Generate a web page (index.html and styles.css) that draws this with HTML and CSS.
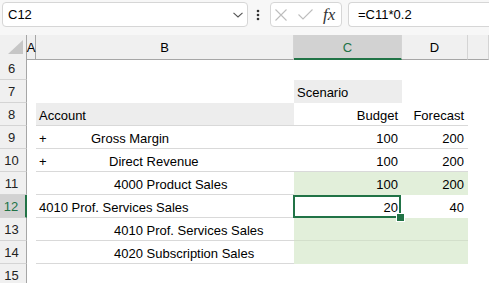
FILE: index.html
```html
<!DOCTYPE html>
<html lang="en">
<head>
  <meta charset="UTF-8" />
  <title>Sheet</title>
  <link rel="stylesheet" href="styles.css">
</head>
<body>
  <div class="toolbar">
    <div class="namebox">
      <span>C12</span>
      <svg width="10" height="6" viewBox="0 0 10 6"><path d="M0.5 0.8 L5 5 L9.5 0.8" fill="none" stroke="#555" stroke-width="1.1"/></svg>
    </div>
    <svg class="more" width="6" height="25" viewBox="0 0 6 25">
      <circle cx="3" cy="9" r="1.3" fill="#333"/>
      <circle cx="3" cy="13" r="1.3" fill="#333"/>
      <circle cx="3" cy="17" r="1.3" fill="#333"/>
    </svg>
    <div class="fxbox">
      <svg class="cancel" width="12" height="12" viewBox="0 0 12 12"><path d="M0.5 0.5 L11.5 11.5 M11.5 0.5 L0.5 11.5" stroke="#bdbdbd" stroke-width="1.1"/></svg>
      <svg class="enter" width="15" height="11" viewBox="0 0 15 11"><path d="M0.5 5.5 L5 10 L14.5 0.5" fill="none" stroke="#bdbdbd" stroke-width="1.1"/></svg>
      <span class="fx">fx</span>
    </div>
    <div class="formula">=C11*0.2</div>
  </div>

  <div class="sheet">
    <div class="row head">
      <div class="corner"><svg width="26" height="21" viewBox="0 0 26 21"><polygon points="8,19 23,19 23,5" fill="#c6c6c6"/></svg></div>
      <div class="ch">A</div>
      <div class="ch">B</div>
      <div class="ch active">C</div>
      <div class="ch">D</div>
      <div class="ch"></div>
    </div>

    <div class="row">
      <div class="rh">6</div><div class="c"></div><div class="c"></div><div class="c"></div><div class="c"></div><div class="c"></div>
    </div>
    <div class="row">
      <div class="rh">7</div><div class="c"></div><div class="c"></div>
      <div class="c shade">Scenario</div><div class="c"></div><div class="c"></div>
    </div>
    <div class="row">
      <div class="rh">8</div><div class="c"></div>
      <div class="c shade line">Account</div>
      <div class="c num line">Budget</div>
      <div class="c num line">Forecast</div>
      <div class="c"></div>
    </div>
    <div class="row">
      <div class="rh">9</div><div class="c"></div>
      <div class="c line"><span class="plus">+</span><span class="lv1">Gross Margin</span></div>
      <div class="c num line">100</div>
      <div class="c num line">200</div>
      <div class="c"></div>
    </div>
    <div class="row">
      <div class="rh">10</div><div class="c"></div>
      <div class="c line"><span class="plus">+</span><span class="lv2">Direct Revenue</span></div>
      <div class="c num line">100</div>
      <div class="c num line">200</div>
      <div class="c"></div>
    </div>
    <div class="row">
      <div class="rh">11</div><div class="c"></div>
      <div class="c line"><span class="lv3">4000 Product Sales</span></div>
      <div class="c num green">100</div>
      <div class="c num green">200</div>
      <div class="c"></div>
    </div>
    <div class="row">
      <div class="rh current">12</div><div class="c"></div>
      <div class="c line">4010 Prof. Services Sales</div>
      <div class="c num selected">20</div>
      <div class="c num">40</div>
      <div class="c"></div>
    </div>
    <div class="row">
      <div class="rh">13</div><div class="c"></div>
      <div class="c line"><span class="lv3">4010 Prof. Services Sales</span></div>
      <div class="c green gline"></div>
      <div class="c green gline"></div>
      <div class="c"></div>
    </div>
    <div class="row">
      <div class="rh">14</div><div class="c"></div>
      <div class="c line"><span class="lv3">4020 Subscription Sales</span></div>
      <div class="c green"></div>
      <div class="c green"></div>
      <div class="c"></div>
    </div>
    <div class="row">
      <div class="rh">15</div><div class="c"></div><div class="c"></div><div class="c"></div><div class="c"></div><div class="c"></div>
    </div>
  </div>
</body>
</html>
```

FILE: styles.css
```css
* { box-sizing: border-box; }
body {
  margin: 0;
  font-family: "Liberation Sans", Arial, sans-serif;
  font-size: 13px;
  color: #000;
  background: #fff;
  overflow: hidden;
}

/* formula bar */
.toolbar {
  height: 35px;
  background: #f7f7f7;
  display: flex;
  align-items: flex-start;
  padding: 2px 0 0 2px;
}
.namebox {
  width: 246px;
  height: 25px;
  background: #fff;
  border: 1px solid #d6d6d6;
  border-radius: 4px;
  display: flex;
  align-items: center;
  justify-content: space-between;
  padding: 0 4px 0 5px;
}
.more { margin-left: 7px; }
.fxbox {
  margin-left: 9px;
  width: 72px;
  height: 25px;
  background: #fff;
  border: 1px solid #d6d6d6;
  border-radius: 4px;
  display: flex;
  align-items: center;
  padding-left: 4px;
}
.enter { margin-left: 11px; }
.fx {
  margin-left: 10px;
  font-family: "Liberation Serif", "Times New Roman", serif;
  font-style: italic;
  font-size: 17px;
  color: #333;
}
.formula {
  margin-left: 6px;
  flex: 1;
  height: 25px;
  background: #fff;
  border: 1px solid #d6d6d6;
  border-right: none;
  border-radius: 4px 0 0 4px;
  display: flex;
  align-items: center;
  padding-left: 9px;
}

/* grid */
.row {
  display: grid;
  grid-template-columns: 27px 9px 258px 108px 66px 1fr;
  height: 23px;
}
.row.head { height: 22px; }
.corner, .ch {
  background: #f0f0f0;
  border-bottom: 1px solid #a6a6a6;
}
.corner { border-right: 1px solid #a6a6a6; }
.ch {
  border-right: 1px solid #d4d4d4;
  display: flex;
  align-items: center;
  justify-content: center;
  padding-top: 1px;
}
.ch:nth-child(2) { border-right-color: #a6a6a6; }
.ch.active {
  background: #d2d2d2;
  color: #217346;
  border-bottom: 2px solid #217346;
}
.rh {
  background: #f0f0f0;
  border-right: 1px solid #a6a6a6;
  border-bottom: 1px solid #d4d4d4;
  display: flex;
  align-items: center;
  justify-content: center;
  padding: 1px 3px 0 0;
  color: #222;
}
.rh.current {
  background: #d2d2d2;
  color: #217346;
  border-right: 2px solid #217346;
}
.c {
  display: flex;
  align-items: center;
  padding: 2px 3px 0;
  white-space: nowrap;
  overflow: hidden;
}
.num { justify-content: flex-end; padding-right: 4px; }
.shade { background: #ededed; }
.green { background: #e2efda; }
.line { border-bottom: 1px solid #d9d9d9; }
.gline { border-bottom: 1px solid #d3dfcb; }

.plus { display: inline-block; width: 8px; }
.lv1 { margin-left: 44px; }
.lv2 { margin-left: 62px; }
.lv3 { margin-left: 75px; }

/* active cell */
.selected {
  position: relative;
  overflow: visible;
}
.selected::after {
  content: "";
  position: absolute;
  top: 0;
  left: -1px;
  right: 1px;
  bottom: 0;
  border: 2px solid #217346;
}
.selected::before {
  content: "";
  position: absolute;
  right: -3px;
  bottom: -4px;
  width: 7px;
  height: 7px;
  background: #217346;
  border: 1px solid #fff;
  z-index: 1;
}
```
